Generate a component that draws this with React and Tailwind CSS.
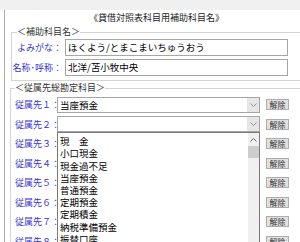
import React from "react";

const items = [
  "現　金",
  "小口現金",
  "現金過不足",
  "当座預金",
  "普通預金",
  "定期預金",
  "定期積金",
  "納税準備預金",
  "振替口座",
  "通知預金",
];

function Chevron({ up }) {
  return (
    <svg width="7" height="4" viewBox="0 0 7 4" className="block">
      {up ? (
        <polyline points="0.5,3.5 3.5,0.5 6.5,3.5" fill="none" stroke="#606060" strokeWidth="1" />
      ) : (
        <polyline points="0.5,0.5 3.5,3.5 6.5,0.5" fill="none" stroke="#909090" strokeWidth="1" />
      )}
    </svg>
  );
}

function Select({ value, open }) {
  return (
    <div className="relative w-[203px] h-[16px]">
      <div className="flex h-full border border-[#a6a6a6] bg-white">
        <div className="flex-1 pl-[2px] text-[9.5px] leading-[14px] text-black">{value}</div>
        <div className="w-[12px] bg-[#e6e6e6] flex items-center justify-center">
          <Chevron />
        </div>
      </div>
      {open && (
        <div className="absolute left-0 top-full w-full h-[130px] border border-[#7a7a7a] bg-white flex">
          <div className="flex-1 pl-[2px] pt-[2px]">
            {items.map((it) => (
              <div key={it} className="h-[12.2px] text-[9.5px] leading-[12.2px] text-black whitespace-pre">
                {it}
              </div>
            ))}
          </div>
          <div className="w-[11px] bg-[#f0f0f0] flex flex-col">
            <div className="h-[13px] flex items-center justify-center">
              <Chevron up />
            </div>
            <div className="h-[12px] bg-[#cdcdcd]" />
          </div>
        </div>
      )}
    </div>
  );
}

export default function App() {
  const rows = ["１", "２", "３", "４", "５", "６", "７", "８"];
  return (
    <div className="w-[300px] h-[242px] overflow-hidden bg-white font-['Noto_Sans_CJK_JP','Liberation_Sans',sans-serif]">
      <div className="h-[10px] bg-[#f0f0f0]" />
      <div className="ml-[4px] h-[232px] border-l border-[#b0b0b0] bg-white">
        <div className="h-[16px] pl-[84px] text-[9px] leading-[16px] text-[#222]">
          《貸借対照表科目用補助科目名》
        </div>

        <fieldset className="ml-[6px] mr-[-20px] border border-[#d5d5d5] pb-[4px]">
          <legend className="ml-[5px] text-[9px] leading-[12px] text-[#333]">＜補助科目名＞</legend>
          <div className="flex flex-col gap-[3px] pt-[1px]">
            <div className="flex items-center">
              <div className="w-[50px] text-right text-[9px] text-[#3535d5]">よみがな：</div>
              <div className="ml-[3px] w-[223px] h-[17px] border border-[#a6a6a6] pl-[2px] text-[9.5px] leading-[15px]">
                ほくよう/とまこまいちゅうおう
              </div>
            </div>
            <div className="flex items-center">
              <div className="w-[50px] text-right text-[9px] text-[#3535d5]">名称･呼称：</div>
              <div className="ml-[3px] w-[223px] h-[17px] border border-[#a6a6a6] pl-[2px] text-[9.5px] leading-[15px]">
                北洋/苫小牧中央
              </div>
            </div>
          </div>
        </fieldset>

        <fieldset className="mt-[1px] ml-[5px] mr-[-20px] border border-[#d5d5d5]">
          <legend className="ml-[4px] text-[9px] leading-[12px] text-[#333]">＜従属先総勘定科目＞</legend>
          <div className="pt-[1px] flex flex-col">
            {rows.map((n, i) => (
              <div key={n} className="h-[19.5px] flex items-center">
                <div className="w-[46px] pl-[4px] text-[9px] text-[#3535d5] whitespace-nowrap">従属先{n}：</div>
                <div className={i === 1 ? "relative z-10" : ""}>
                  <Select value={i === 0 ? "当座預金" : ""} open={i === 1} />
                </div>
                <div className="ml-[6px] w-[23px] h-[11px] border border-[#adadad] bg-[#e1e1e1] text-[8px] leading-[9px] text-center text-[#333]">
                  解除
                </div>
              </div>
            ))}
          </div>
        </fieldset>
      </div>
    </div>
  );
}
